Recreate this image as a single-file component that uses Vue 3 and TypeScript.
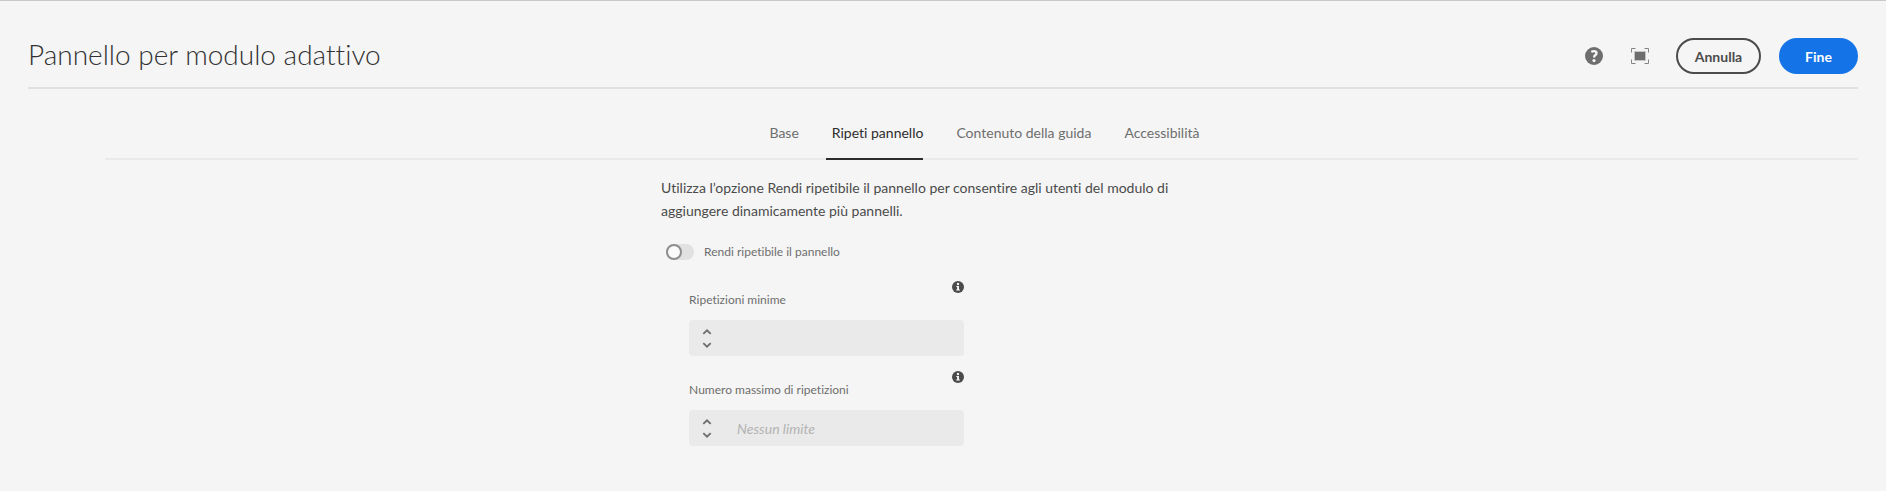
<script setup lang="ts">
import { ref } from 'vue'

interface Tab {
  id: string
  label: string
}

interface Field {
  id: string
  label: string
  placeholder: string
}

const tabs: Tab[] = [
  { id: 'base', label: 'Base' },
  { id: 'ripeti', label: 'Ripeti pannello' },
  { id: 'guida', label: 'Contenuto della guida' },
  { id: 'accessibilita', label: 'Accessibilità' },
]

const fields: Field[] = [
  { id: 'min', label: 'Ripetizioni minime', placeholder: '' },
  { id: 'max', label: 'Numero massimo di ripetizioni', placeholder: 'Nessun limite' },
]

const activeTab = ref('ripeti')
const repeatable = ref(false)
const values = ref<Record<string, string>>({ min: '', max: '' })

function step(id: string, delta: number) {
  const next = (Number(values.value[id]) || 0) + delta
  values.value[id] = String(Math.max(0, next))
}
</script>

<template>
  <form class="dialog" @submit.prevent>
    <header class="header">
      <h1 class="title">Pannello per modulo adattivo</h1>
      <div class="actions">
        <button type="button" class="icon-button" aria-label="Aiuto">
          <svg width="18" height="18" viewBox="0 0 18 18" aria-hidden="true">
            <circle cx="9" cy="9" r="9" fill="#6e6e6e" />
            <path d="M6.3 4.9Q7.5 4.1 9 4.1Q11.5 4.1 11.5 6.1Q11.5 7.3 10.4 8.1Q9.1 9 9.1 10.5" fill="none" stroke="#f5f5f5" stroke-width="2.4" />
            <circle cx="9" cy="13.6" r="1.6" fill="#f5f5f5" />
          </svg>
        </button>
        <button type="button" class="icon-button" aria-label="Schermo intero">
          <svg width="18" height="16" viewBox="0 0 18 16" aria-hidden="true">
            <path d="M0.5 4.5V0.5H4.5M13.5 0.5H17.5V4.5M17.5 11.5V15.5H13.5M4.5 15.5H0.5V11.5" fill="none" stroke="#858585" />
            <rect x="3" y="3" width="12" height="10" fill="#c4c4c4" />
            <rect x="4" y="4" width="10" height="8" fill="#6e6e6e" />
          </svg>
        </button>
        <button type="button" class="button secondary">Annulla</button>
        <button type="submit" class="button primary">Fine</button>
      </div>
    </header>

    <nav class="tabs">
      <a
        v-for="tab in tabs"
        :key="tab.id"
        :href="'#' + tab.id"
        class="tab"
        :class="{ active: tab.id === activeTab }"
        @click.prevent="activeTab = tab.id"
      >{{ tab.label }}</a>
    </nav>

    <section class="content">
      <p class="description">
        Utilizza l’opzione Rendi ripetibile il pannello per consentire agli utenti del modulo di
        aggiungere dinamicamente più pannelli.
      </p>

      <div class="toggle">
        <input id="repeatable" v-model="repeatable" type="checkbox" role="switch" class="switch" />
        <label for="repeatable">Rendi ripetibile il pannello</label>
      </div>

      <div v-for="field in fields" :key="field.id" class="field">
        <div class="field-head">
          <label :for="field.id">{{ field.label }}</label>
          <button type="button" class="info" :aria-label="'Informazioni: ' + field.label">
            <svg width="12" height="12" viewBox="0 0 12 12" aria-hidden="true">
              <circle cx="6" cy="6" r="6" fill="#4b4b4b" />
              <circle cx="6" cy="3" r="1.2" fill="#f5f5f5" />
              <path d="M4.3 5H7V8.4H7.9V9.6H4.2V8.4H5.1V6.1H4.3Z" fill="#f5f5f5" />
            </svg>
          </button>
        </div>
        <div class="number">
          <div class="steppers">
            <button type="button" class="stepper" aria-label="Aumenta" @click="step(field.id, 1)">
              <svg width="10" height="6" viewBox="0 0 10 6" aria-hidden="true">
                <path d="M1.3 4.8L5 1.3L8.7 4.8" />
              </svg>
            </button>
            <button type="button" class="stepper" aria-label="Diminuisci" @click="step(field.id, -1)">
              <svg width="10" height="6" viewBox="0 0 10 6" aria-hidden="true">
                <path d="M1.3 1.2L5 4.7L8.7 1.2" />
              </svg>
            </button>
          </div>
          <input :id="field.id" v-model="values[field.id]" type="text" inputmode="numeric" :placeholder="field.placeholder" />
        </div>
      </div>
    </section>
  </form>
</template>

<style>
body {
  background: #f5f5f5;
}
</style>

<style scoped>
.dialog {
  box-sizing: border-box;
  min-height: 100vh;
  padding: 0 28px 24px;
  border-top: 1px solid #c8c8c8;
  background: #f5f5f5;
  color: #4b4b4b;
  font-family: Lato, "Open Sans", sans-serif;
  font-size: 14px;
  font-variant-ligatures: none;
}

button,
input {
  margin: 0;
  padding: 0;
  border: 0;
  background: none;
  color: inherit;
  font: inherit;
}

button {
  cursor: pointer;
}

svg {
  display: block;
}

.header {
  display: flex;
  align-items: center;
  justify-content: space-between;
  padding-top: 24px;
  height: 62px;
  border-bottom: 2px solid #e1e1e1;
}

.title {
  margin: 0;
  padding-bottom: 4px;
  color: #323232;
  font-size: 28px;
  font-weight: 300;
  line-height: 36px;
}

.actions {
  display: flex;
  align-items: center;
}

.icon-button {
  display: grid;
  place-items: center;
  width: 46px;
  height: 36px;
}

.button {
  box-sizing: border-box;
  height: 36px;
  border-radius: 18px;
  font-weight: 700;
}

.secondary {
  width: 85px;
  margin-left: 13px;
  border: 2px solid #4b4b4b;
}

.primary {
  width: 79px;
  margin-left: 18px;
  background: #1473e6;
  color: #fff;
}

.tabs {
  display: flex;
  justify-content: center;
  gap: 27px;
  margin: 22px 0 0 77px;
  border-bottom: 2px solid #eaeaea;
}

.tab {
  margin-bottom: -2px;
  padding: 0 0 3px 6px;
  border-bottom: 2px solid transparent;
  color: #6e6e6e;
  line-height: 44px;
  text-decoration: none;
}

.active {
  border-bottom-color: #2c2c2c;
  color: #2c2c2c;
}

.content {
  max-width: 524px;
  margin-left: calc(35vw - 27px);
  padding-top: 16px;
}

.description {
  margin: 0;
  line-height: 23px;
}

.toggle {
  display: flex;
  align-items: center;
  gap: 10px;
  margin: 22px 0 20px 5px;
  color: #6e6e6e;
  font-size: 12px;
  line-height: 16px;
}

.switch {
  appearance: none;
  display: flex;
  width: 28px;
  height: 16px;
  border-radius: 8px;
  background: #e1e1e1;
}

.switch::before {
  content: "";
  box-sizing: border-box;
  width: 16px;
  height: 16px;
  border: 2px solid #8e8e8e;
  border-radius: 50%;
  background: #fafafa;
}

.switch:checked {
  justify-content: flex-end;
}

.field {
  width: 275px;
  margin: 0 0 14px 28px;
}

.field-head {
  display: flex;
  align-items: flex-start;
  justify-content: space-between;
  height: 40px;
  color: #6e6e6e;
  font-size: 12px;
}

.field-head label {
  padding-top: 11px;
  line-height: 18px;
}

.info {
  padding-top: 1px;
}

.number {
  display: flex;
  height: 36px;
  border-radius: 4px;
  background: #eaeaea;
}

.steppers {
  display: flex;
  flex-direction: column;
  justify-content: center;
  gap: 1px;
  padding: 0 13px;
}

.stepper {
  display: grid;
  place-items: center;
  height: 12px;
}

.stepper path {
  fill: none;
  stroke: #6e6e6e;
  stroke-width: 1.8;
}

.number input {
  flex: 1;
  min-width: 0;
  padding: 0 12px;
  outline-offset: -1px;
}

.number input::placeholder {
  color: #b3b3b3;
  font-style: italic;
  opacity: 1;
}
</style>
